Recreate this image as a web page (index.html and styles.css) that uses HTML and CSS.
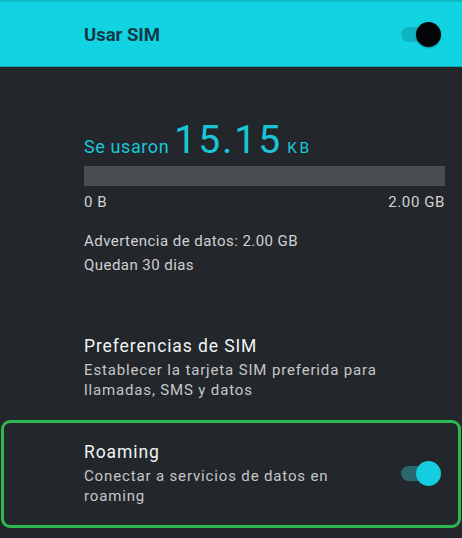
FILE: index.html
```html
<!DOCTYPE html>
<html lang="es">
<head>
<meta charset="utf-8">
<title>Usar SIM</title>
<link rel="stylesheet" href="styles.css">
</head>
<body>
<header class="topbar">
  <span class="topbar-title">Usar SIM</span>
  <span class="switch switch-header"><span class="track"></span><span class="thumb"></span></span>
</header>
<main>
  <section class="usage">
    <div class="usage-row">
      <span class="usage-label">Se usaron</span>
      <span class="usage-num">15.15</span>
      <span class="usage-unit">KB</span>
    </div>
    <div class="bar"></div>
    <div class="bar-labels"><span>0 B</span><span>2.00 GB</span></div>
    <p class="info">Advertencia de datos: 2.00 GB<br>Quedan 30 dias</p>
  </section>
  <section class="item item-pref">
    <div class="item-text">
      <div class="item-title">Preferencias de SIM</div>
      <div class="item-sub">Establecer la tarjeta SIM preferida para<br>llamadas, SMS y datos</div>
    </div>
  </section>
  <section class="item item-roaming">
    <div class="item-text">
      <div class="item-title">Roaming</div>
      <div class="item-sub">Conectar a servicios de datos en<br>roaming</div>
    </div>
    <span class="switch switch-on"><span class="track"></span><span class="thumb"></span></span>
  </section>
</main>
</body>
</html>
```
FILE: styles.css
```css
html, body {
  margin: 0;
  padding: 0;
}
body {
  background: #23272b;
  font-family: Roboto, "Noto Sans", sans-serif;
  color: #d4d6d8;
  width: 462px;
  height: 538px;
  overflow: hidden;
}
.topbar {
  height: 64px;
  background: #12d3e1;
  border-top: 2px solid #0fb9c6;
  border-bottom: 1px solid #14a9b4;
  display: flex;
  align-items: center;
  padding: 0 21px 0 84px;
}
.topbar-title {
  flex: 1;
  font-size: 18.5px;
  font-weight: 700;
  color: #0e3a47;
  padding-top: 2px;
}
.switch {
  position: relative;
  width: 40px;
  height: 25px;
  display: block;
}
.switch .track {
  position: absolute;
  left: 0;
  top: 5px;
  width: 38px;
  height: 15px;
  border-radius: 8px;
}
.switch .thumb {
  position: absolute;
  right: 0;
  top: 0;
  width: 25px;
  height: 25px;
  border-radius: 50%;
}
.switch-header .track { background: #10b4c1; }
.switch-header .thumb { background: #030506; box-shadow: 0 1px 2px rgba(0,0,0,0.3); }
.switch-on .track { background: #2b676c; }
.switch-on .thumb { background: #14cde0; }

.usage {
  padding: 54px 17px 0 84px;
}
.usage-row {
  height: 41px;
  display: flex;
  align-items: baseline;
  gap: 5px;
  color: #19c6d8;
  white-space: nowrap;
}
.usage-row span {
  line-height: 1;
}
.usage-label {
  font-size: 18px;
  letter-spacing: 0.6px;
}
.usage-num {
  font-size: 39px;
  letter-spacing: 2px;
}
.usage-unit {
  font-size: 15.5px;
  letter-spacing: 2.5px;
}
.bar {
  margin-top: 4px;
  height: 20px;
  background: #4b4e51;
}
.bar-labels {
  margin-top: 6px;
  display: flex;
  justify-content: space-between;
  font-size: 15px;
  line-height: 20px;
  letter-spacing: 0.6px;
  color: #cfd1d3;
}
.info {
  margin: 17px 0 0;
  font-size: 15px;
  line-height: 24px;
  letter-spacing: 0.45px;
  color: #cfd1d3;
}
.item {
  display: flex;
  align-items: center;
}
.item-pref {
  padding: 57px 20px 0 84px;
}
.item-title {
  font-size: 17.5px;
  line-height: 24px;
  letter-spacing: 0.9px;
  color: #f2f3f4;
}
.item-sub {
  margin-top: 2px;
  font-size: 15px;
  line-height: 20px;
  letter-spacing: 0.85px;
  color: #c4c6c8;
}
.item-text {
  flex: 1;
}
.item-roaming {
  margin: 20px 1px 0;
  border: 3px solid #2eb64f;
  border-radius: 9px;
  padding: 17px 17px 19px 80px;
}
```
